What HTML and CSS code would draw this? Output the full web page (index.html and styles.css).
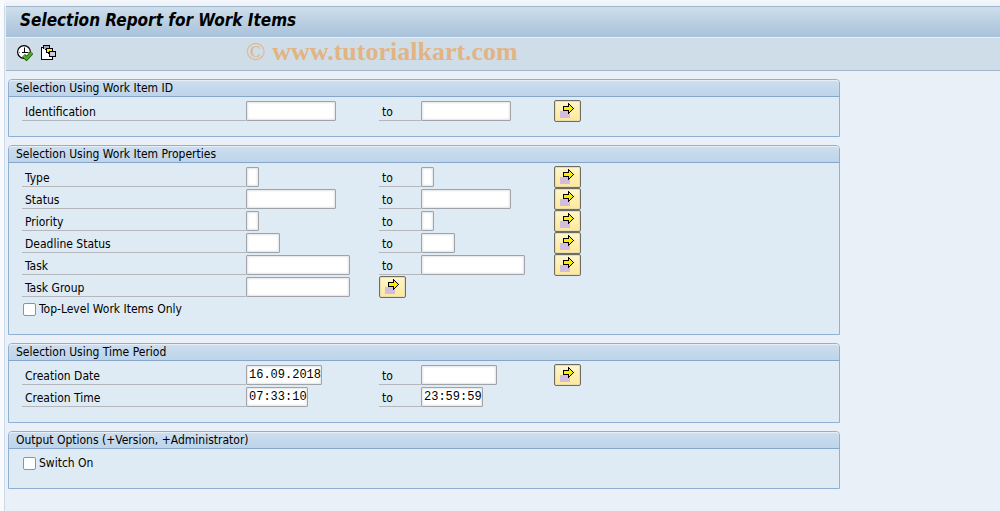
FILE: index.html
```html
<!DOCTYPE html>
<html lang="en">
<head>
    <meta charset="UTF-8">
    <meta name="viewport" content="width=device-width, initial-scale=1.0">
    <title>Selection Report for Work Items</title>
    <link rel="stylesheet" href="styles.css">
</head>
<body>
    <!-- shared icons -->
    <svg class="sprite" aria-hidden="true">
        <symbol id="icon-arrow" viewBox="0 0 16 16">
            <path fill="#d3bddd" d="M1 8h10v7H1z"/>
            <path fill="#000" d="M9 0h1v1h1v1h1v1h1v1h1v1h1v1h-1v1h-1v1h-1v1h-1v1h-1v1H9V8H4V3h5z"/>
            <path fill="#ffeb00" d="M10 2h1v1h1v1h1v1h1v1h-1v1h-1v1h-1v1h-1V7H5V4h5z"/>
        </symbol>
    </svg>

    <div class="window">
        <header>
            <h1>Selection Report for Work Items</h1>
            <div class="toolbar">
                <button type="button" class="tool" aria-label="Execute">
                    <svg width="16" height="16" viewBox="0 0 16 16">
                        <circle cx="7" cy="7" r="6.4" fill="#fff" stroke="#000" stroke-width="1.2"/>
                        <path fill="#777" d="M7 2h1v1H7zM2 7h1v1H2zM11 7h1v1h-1zM7 11h1v1H7z"/>
                        <path fill="#000" d="M7 3h1v4h3v1H5V7h2z"/>
                        <path fill="none" stroke="#184d08" stroke-width="4" d="M6.500 10.500l3 3L15 7.500"/>
                        <path fill="none" stroke="#4fae22" stroke-width="2.500" d="M6.500 10.500l3 3L15 7.500"/>
                    </svg>
                </button>
                <button type="button" class="tool" aria-label="Get Variant">
                    <svg width="16" height="16" viewBox="0 0 16 16">
                        <path fill="#000" d="M0 2h3v1H1v11h10v-2h1v3H0z"/>
                        <path fill="#fff" d="M1 3h4v5h4v4h2v2H1z"/>
                        <path fill="#000" d="M2 0h7v5H4V4H2z"/>
                        <path fill="#a9a0c4" d="M3 1h5v3H3z"/>
                        <path fill="#000" d="M5 3h7v6H7V8H5z"/>
                        <path fill="#ffe900" d="M6 4h5v3H6z"/>
                        <path fill="#000" d="M8 6h7v6H8z"/>
                        <path fill="#c9ccdf" d="M9 7h5v4H9z"/>
                    </svg>
                </button>
                <span class="watermark"><span class="copy">©</span> www.tutorialkart.com</span>
            </div>
        </header>

        <form>
            <section class="panel">
                <h2>Selection Using Work Item ID</h2>
                <div class="rows">
                    <div class="row">
                        <label for="id-from">Identification</label>
                        <input type="text" id="id-from" class="w-medium">
                        <label for="id-to">to</label>
                        <input type="text" id="id-to" class="w-medium">
                        <button type="button" class="more" aria-label="Multiple selection"><svg><use href="#icon-arrow"/></svg></button>
                    </div>
                </div>
            </section>

            <section class="panel">
                <h2>Selection Using Work Item Properties</h2>
                <div class="rows">
                    <div class="row">
                        <label for="type-from">Type</label>
                        <input type="text" id="type-from" class="w-char">
                        <label for="type-to">to</label>
                        <input type="text" id="type-to" class="w-char">
                        <button type="button" class="more" aria-label="Multiple selection"><svg><use href="#icon-arrow"/></svg></button>
                    </div>
                    <div class="row">
                        <label for="status-from">Status</label>
                        <input type="text" id="status-from" class="w-medium">
                        <label for="status-to">to</label>
                        <input type="text" id="status-to" class="w-medium">
                        <button type="button" class="more" aria-label="Multiple selection"><svg><use href="#icon-arrow"/></svg></button>
                    </div>
                    <div class="row">
                        <label for="priority-from">Priority</label>
                        <input type="text" id="priority-from" class="w-char">
                        <label for="priority-to">to</label>
                        <input type="text" id="priority-to" class="w-char">
                        <button type="button" class="more" aria-label="Multiple selection"><svg><use href="#icon-arrow"/></svg></button>
                    </div>
                    <div class="row">
                        <label for="deadline-from">Deadline Status</label>
                        <input type="text" id="deadline-from" class="w-short">
                        <label for="deadline-to">to</label>
                        <input type="text" id="deadline-to" class="w-short">
                        <button type="button" class="more" aria-label="Multiple selection"><svg><use href="#icon-arrow"/></svg></button>
                    </div>
                    <div class="row">
                        <label for="task-from">Task</label>
                        <input type="text" id="task-from" class="w-long">
                        <label for="task-to">to</label>
                        <input type="text" id="task-to" class="w-long">
                        <button type="button" class="more" aria-label="Multiple selection"><svg><use href="#icon-arrow"/></svg></button>
                    </div>
                    <div class="row">
                        <label for="task-group">Task Group</label>
                        <input type="text" id="task-group" class="w-long">
                        <button type="button" class="more" aria-label="Multiple selection"><svg><use href="#icon-arrow"/></svg></button>
                    </div>
                    <div class="check-row">
                        <input type="checkbox" id="top-level">
                        <label for="top-level">Top-Level Work Items Only</label>
                    </div>
                </div>
            </section>

            <section class="panel">
                <h2>Selection Using Time Period</h2>
                <div class="rows">
                    <div class="row">
                        <label for="date-from">Creation Date</label>
                        <input type="text" id="date-from" class="w-date" value="16.09.2018">
                        <label for="date-to">to</label>
                        <input type="text" id="date-to" class="w-date">
                        <button type="button" class="more" aria-label="Multiple selection"><svg><use href="#icon-arrow"/></svg></button>
                    </div>
                    <div class="row">
                        <label for="time-from">Creation Time</label>
                        <input type="text" id="time-from" class="w-time" value="07:33:10">
                        <label for="time-to">to</label>
                        <input type="text" id="time-to" class="w-time" value="23:59:59">
                    </div>
                </div>
            </section>

            <section class="panel">
                <h2>Output Options (+Version, +Administrator)</h2>
                <div class="rows">
                    <div class="check-row">
                        <input type="checkbox" id="switch-on">
                        <label for="switch-on">Switch On</label>
                    </div>
                </div>
            </section>
        </form>
    </div>
</body>
</html>
```
FILE: styles.css
```css
:root {
    --page-color: #e9f0f7;
    --panel-color: #deebf4;
    --panel-border: #8fb0d0;
    --toolbar-color: #cfdde8;
    --line-color: #b4b8bc;
    --text-color: #000000;
}

* {
    margin: 0;
    padding: 0;
    box-sizing: border-box;
}

body {
    background: linear-gradient(#f4f7fb, var(--page-color) 8px);
    color: var(--text-color);
    font-family: Tahoma, "DejaVu Sans Condensed", "DejaVu Sans", sans-serif;
    font-size: 12px;
    min-height: 100vh;
    padding-top: 6px;
    border-left: 4px solid #f8fafd;
}

.sprite {
    display: none;
}

.window {
    border-left: 1px solid #cbd8e6;
    margin-left: 0;
    padding-left: 1px;
    min-height: calc(100vh - 6px);
}

header {
    border: 1px solid #a3b7cc;
    border-right: none;
    border-left: none;
}

h1 {
    height: 30px;
    padding-left: 14px;
    background: linear-gradient(#cfdfec, #b9cfe2 50%, #a9c2db);
    font-size: 17px;
    line-height: 27px;
    font-style: italic;
    font-weight: bold;
}

.toolbar {
    display: flex;
    align-items: center;
    height: 33px;
    padding: 0 0 2px 11px;
    border-top: 1px solid #eaf2f9;
    background-color: var(--toolbar-color);
}

.tool {
    width: 16px;
    height: 16px;
    margin-right: 8px;
    border: none;
    background: none;
}

.tool svg {
    display: block;
}

.watermark {
    margin-left: 181px;
    padding-bottom: 2px;
    color: #e2b483;
    font-family: "Liberation Serif", serif;
    font-size: 26px;
    font-weight: bold;
    line-height: 28px;
}

.watermark .copy {
    font-weight: normal;
}

form {
    display: flex;
    flex-direction: column;
    gap: 8px;
    max-width: 834px;
    padding: 8px 0 8px 2px;
}

.panel {
    border: 1px solid var(--panel-border);
    border-radius: 4px 4px 0 0;
    background-color: var(--panel-color);
}

.panel h2 {
    height: 17px;
    padding-left: 7px;
    border-top: 1px solid #e6eff8;
    border-bottom: 1px solid #86a5c8;
    border-radius: 3px 3px 0 0;
    background: linear-gradient(#cddeee, #bdd4ea);
    font-size: 12px;
    font-weight: normal;
    line-height: 15px;
}

.rows {
    padding: 3px 13px 14px;
}

.row {
    display: grid;
    grid-template-columns: 224px 133px 42px 133px 27px;
    align-items: center;
    height: 22px;
}

.row label {
    height: 20px;
    padding-left: 3px;
    border-bottom: 1px solid var(--line-color);
    line-height: 22px;
}

input[type="text"] {
    height: 20px;
    padding-left: 2px;
    border: 1px solid #a0a4a9;
    border-radius: 1px;
    background-color: #ffffff;
    box-shadow: inset 0 0 2px 1px #e2e4e7;
    color: var(--text-color);
    font-family: "Liberation Mono", monospace;
    font-size: 12px;
}

.w-char {
    width: 13px;
}

.w-short {
    width: 34px;
}

.w-time {
    width: 62px;
}

.w-date {
    width: 76px;
}

.w-medium {
    width: 90px;
}

.w-long {
    width: 104px;
}

.more {
    width: 27px;
    height: 22px;
    padding: 2px 4px;
    border: 1px solid #6f6c62;
    border-radius: 2px;
    background: linear-gradient(#fff6cf, #fde896);
    box-shadow: inset 0 0 0 1px #e9dcae;
}

.more svg {
    display: block;
    width: 16px;
    height: 16px;
}

.check-row {
    display: flex;
    align-items: center;
    gap: 3px;
    height: 22px;
    padding-left: 1px;
}

input[type="checkbox"] {
    appearance: none;
    width: 13px;
    height: 13px;
    border: 1px solid #8f9398;
    border-radius: 2px;
    background-color: #ffffff;
}

input[type="checkbox"]:checked {
    background-color: #4a7ab0;
}
```
